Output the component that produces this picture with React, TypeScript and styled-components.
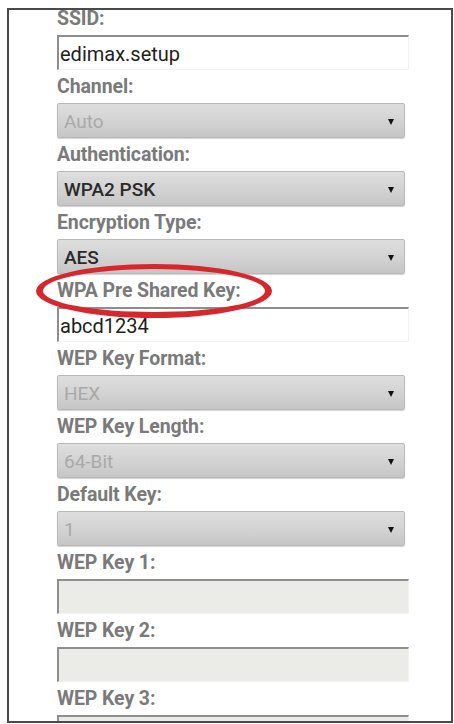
import styled, { createGlobalStyle } from 'styled-components';

const GlobalStyle = createGlobalStyle`
  html, body {
    margin: 0;
    padding: 0;
    background: #ffffff;
  }
  body {
    font-family: Roboto, 'Liberation Sans', sans-serif;
  }
`;

const Page = styled.div`
  padding: 8px 0 0 7px;
  width: 454px;
  box-sizing: border-box;
`;

const Frame = styled.div`
  position: relative;
  width: 446px;
  height: 715px;
  box-sizing: border-box;
  border: 2px solid #4a4a4a;
  overflow: hidden;
  padding-left: 48px;
  background: #ffffff;
`;

const Form = styled.div`
  display: flex;
  flex-direction: column;
  margin-top: -8px;
`;

const Field = styled.div`
  display: flex;
  flex-direction: column;
`;

const Label = styled.div`
  height: 33px;
  line-height: 34px;
  font-size: 19.5px;
  font-weight: 700;
  color: #7a7a7a;
  white-space: nowrap;
  letter-spacing: -0.1px;
`;

const SelectBox = styled.div<{ $disabled?: boolean }>`
  display: flex;
  align-items: center;
  justify-content: space-between;
  width: 348px;
  height: 35px;
  box-sizing: border-box;
  padding: 2px 10px 0 6px;
  border: 1px solid #b9b9b9;
  border-radius: 2px;
  background: linear-gradient(to bottom, #dedede 0%, #d2d2d2 55%, #c6c6c6 100%);
  box-shadow: 0 1px 1px rgba(0, 0, 0, 0.18);
  font-size: 19px;
  font-weight: ${(p) => (p.$disabled ? 400 : 500)};
  color: ${(p) => (p.$disabled ? '#a9a9a9' : '#2a2a2a')};
`;

const Caret = styled.span`
  width: 0;
  height: 0;
  border-left: 3.5px solid transparent;
  border-right: 3.5px solid transparent;
  border-top: 6px solid #111111;
  margin-top: 1px;
`;

const TextBox = styled.input<{ $disabled?: boolean }>`
  width: 352px;
  height: 35px;
  box-sizing: border-box;
  margin: 0;
  padding: 2px 0 0 1px;
  border-style: solid;
  border-width: 2px 1px 1px 2px;
  border-color: #8e8e8e #f2f2f2 #f2f2f2 #8e8e8e;
  border-radius: 0;
  outline: none;
  background: ${(p) => (p.$disabled ? '#ebebe7' : '#ffffff')};
  font-family: Roboto, 'Liberation Sans', sans-serif;
  font-size: 20px;
  color: #1e1e1e;
`;

const Highlight = styled.div`
  position: absolute;
  left: 27px;
  top: 254px;
  width: 236px;
  height: 54px;
  box-sizing: border-box;
  border-style: solid;
  border-color: #d6272c;
  border-width: 5px 7px 6px 7px;
  border-radius: 50%;
  pointer-events: none;
`;

type Row = {
  label: string;
  kind: 'text' | 'select';
  value: string;
  disabled?: boolean;
};

const rows: Row[] = [
  { label: 'SSID:', kind: 'text', value: 'edimax.setup' },
  { label: 'Channel:', kind: 'select', value: 'Auto', disabled: true },
  { label: 'Authentication:', kind: 'select', value: 'WPA2 PSK' },
  { label: 'Encryption Type:', kind: 'select', value: 'AES' },
  { label: 'WPA Pre Shared Key:', kind: 'text', value: 'abcd1234' },
  { label: 'WEP Key Format:', kind: 'select', value: 'HEX', disabled: true },
  { label: 'WEP Key Length:', kind: 'select', value: '64-Bit', disabled: true },
  { label: 'Default Key:', kind: 'select', value: '1', disabled: true },
  { label: 'WEP Key 1:', kind: 'text', value: '', disabled: true },
  { label: 'WEP Key 2:', kind: 'text', value: '', disabled: true },
  { label: 'WEP Key 3:', kind: 'text', value: '', disabled: true },
];

export default function App() {
  return (
    <>
      <GlobalStyle />
      <Page>
        <Frame>
          <Form>
            {rows.map((r) => (
              <Field key={r.label}>
                <Label>{r.label}</Label>
                {r.kind === 'select' ? (
                  <SelectBox $disabled={r.disabled}>
                    <span>{r.value}</span>
                    <Caret />
                  </SelectBox>
                ) : (
                  <TextBox $disabled={r.disabled} readOnly defaultValue={r.value} />
                )}
              </Field>
            ))}
          </Form>
          <Highlight />
        </Frame>
      </Page>
    </>
  );
}
